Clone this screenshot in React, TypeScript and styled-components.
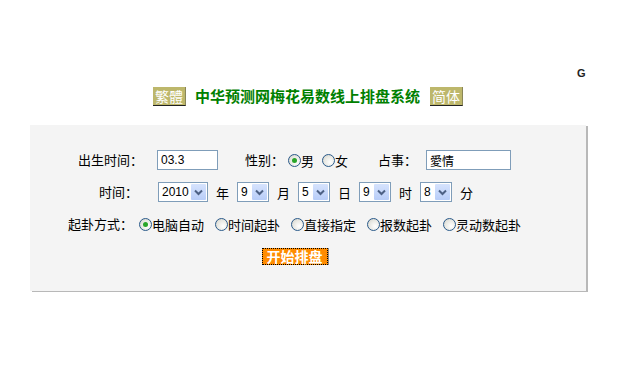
import React from "react";
import styled, { createGlobalStyle } from "styled-components";

const GlobalStyle = createGlobalStyle`
  html, body {
    margin: 0;
    padding: 0;
    background: #ffffff;
  }
  body {
    font-family: "Noto Sans CJK SC", "Liberation Sans", sans-serif;
    font-size: 13px;
    color: #000;
  }
`;

const Page = styled.div`
  position: relative;
  width: 616px;
  height: 384px;
`;

const Corner = styled.div`
  position: absolute;
  left: 577px;
  top: 67px;
  font-family: "Liberation Sans", sans-serif;
  font-weight: bold;
  font-size: 11px;
  line-height: 12px;
  color: #222;
`;

const TitleBar = styled.div`
  display: flex;
  justify-content: center;
  align-items: center;
  padding-top: 86px;
  height: 20px;
`;

const Badge = styled.span`
  display: inline-flex;
  align-items: center;
  justify-content: center;
  height: 18px;
  padding: 0 2px;
  background: #bdb76b;
  color: #fff;
  font-size: 14px;
  line-height: 18px;
  border-right: 1px solid #8a8658;
  border-bottom: 1px solid #222;
`;

const Title = styled.h1`
  margin: 0 10px 0 9px;
  font-size: 15px;
  line-height: 20px;
  font-weight: bold;
  color: #008000;
`;

const Panel = styled.div`
  margin: 19px 0 0 30px;
  width: 556px;
  padding: 19px 27px 19px 0;
  box-sizing: border-box;
  background: #f4f4f4;
  box-shadow: 2px 1px 0 #b8b8b8;
`;

const Row = styled.div<{ $shift?: number }>`
  display: flex;
  justify-content: center;
  align-items: center;
  height: 32px;
  margin-right: ${(p) => p.$shift ?? 0}px;
  white-space: nowrap;
`;

const Label = styled.span<{ $gap?: number; $ml?: number }>`
  margin-right: ${(p) => p.$gap ?? 0}px;
  margin-left: ${(p) => p.$ml ?? 0}px;
  line-height: 16px;
`;

const TextInput = styled.span<{ $w: number; $ml?: number; $cjk?: boolean }>`
  display: inline-flex;
  align-items: center;
  box-sizing: border-box;
  width: ${(p) => p.$w}px;
  height: 20px;
  margin-left: ${(p) => p.$ml ?? 0}px;
  padding-left: 3px;
  border: 1px solid #7f9db9;
  background: #fff;
  font-family: ${(p) => (p.$cjk ? `"Noto Sans CJK SC", sans-serif` : `"Liberation Sans", sans-serif`)};
  font-size: 12px;
`;

const Select = styled.span<{ $w: number }>`
  display: inline-flex;
  align-items: stretch;
  box-sizing: border-box;
  width: ${(p) => p.$w}px;
  height: 20px;
  border: 1px solid #7f9db9;
  background: #fff;
  font-family: "Liberation Sans", sans-serif;
  font-size: 12px;
`;

const SelectValue = styled.span`
  flex: 1;
  display: flex;
  align-items: center;
  padding-left: 3px;
`;

const Arrow = styled.span`
  width: 15px;
  margin: 1px;
  display: flex;
  align-items: center;
  justify-content: center;
  background: linear-gradient(180deg, #d6e3fd 0%, #b8cdf8 100%);
  border-radius: 1px;
`;

const Unit = styled.span`
  margin: 0 8px;
`;

const RadioDot = styled.span<{ $on?: boolean }>`
  position: relative;
  display: inline-block;
  box-sizing: border-box;
  width: 13px;
  height: 13px;
  border-radius: 50%;
  border: 1px solid #2a5a8a;
  background: radial-gradient(circle at 65% 65%, #ffffff 0%, #e6e6e0 60%, #c8c8c0 100%);
  &::after {
    content: "";
    display: ${(p) => (p.$on ? "block" : "none")};
    position: absolute;
    left: 3px;
    top: 3px;
    width: 5px;
    height: 5px;
    border-radius: 50%;
    background: #2aa52a;
  }
`;

const Choice = styled.span<{ $ml?: number }>`
  display: inline-flex;
  align-items: center;
  margin-left: ${(p) => p.$ml ?? 0}px;
`;

const Go = styled.span`
  display: inline-flex;
  align-items: center;
  justify-content: center;
  box-sizing: border-box;
  width: 66px;
  height: 17px;
  background: #ff8c00;
  color: #fff;
  font-weight: bold;
  font-size: 14px;
  border: 1px dotted #000;
  box-shadow: 1px 0 0 #8c8c8c;
`;

const Chevron = () => (
  <svg width="9" height="7" viewBox="0 0 9 7">
    <path d="M1 1.5 L4.5 5 L8 1.5" fill="none" stroke="#4d6185" strokeWidth="2" />
  </svg>
);

function Dropdown({ value, w }: { value: string; w: number }) {
  return (
    <Select $w={w}>
      <SelectValue>{value}</SelectValue>
      <Arrow>
        <Chevron />
      </Arrow>
    </Select>
  );
}

function Radio({ label, on, ml }: { label: string; on?: boolean; ml?: number }) {
  return (
    <Choice $ml={ml}>
      <RadioDot $on={on} />
      <span>{label}</span>
    </Choice>
  );
}

export default function App() {
  return (
    <>
      <GlobalStyle />
      <Page>
        <Corner>G</Corner>
        <TitleBar>
          <Badge>繁體</Badge>
          <Title>中华预测网梅花易数线上排盘系统</Title>
          <Badge>简体</Badge>
        </TitleBar>
        <Panel>
          <Row>
            <Label>出生时间：</Label>
            <TextInput $w={61} $ml={14}>03.3</TextInput>
            <Label $ml={27}>性别：</Label>
            <Radio label="男" on ml={4} />
            <Radio label="女" ml={8} />
            <Label $ml={30}>占事：</Label>
            <TextInput $w={85} $ml={9} $cjk>
              愛情
            </TextInput>
          </Row>
          <Row $shift={9}>
            <Label $gap={20}>时间：</Label>
            <Dropdown value="2010" w={50} />
            <Unit>年</Unit>
            <Dropdown value="9" w={32} />
            <Unit>月</Unit>
            <Dropdown value="5" w={32} />
            <Unit>日</Unit>
            <Dropdown value="9" w={32} />
            <Unit>时</Unit>
            <Dropdown value="8" w={32} />
            <Unit>分</Unit>
          </Row>
          <Row>
            <Label $gap={6}>起卦方式：</Label>
            <Radio label="电脑自动" on />
            <Radio label="时间起卦" ml={11} />
            <Radio label="直接指定" ml={11} />
            <Radio label="报数起卦" ml={11} />
            <Radio label="灵动数起卦" ml={11} />
          </Row>
          <Row>
            <Go>开始排盘</Go>
          </Row>
        </Panel>
      </Page>
    </>
  );
}
